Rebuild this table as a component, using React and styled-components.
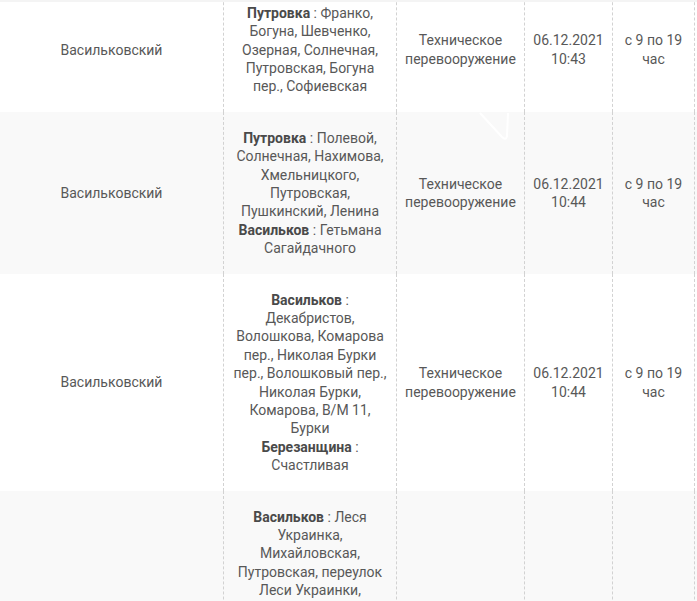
import styled, { createGlobalStyle } from "styled-components";

const GlobalStyle = createGlobalStyle`
  html, body {
    margin: 0;
    padding: 0;
    background: #fff;
  }
  body {
    font-family: Roboto, "Liberation Sans", sans-serif;
  }
`;

const Viewport = styled.div`
  width: 697px;
  height: 601px;
  overflow: hidden;
  box-sizing: border-box;
  border-top: 2px solid #f4f4f4;
`;

const Table = styled.div`
  margin-top: -14.8px;
`;

const Row = styled.div`
  position: relative;
  display: grid;
  grid-template-columns: 223px 173px 128px 88px 82px 1fr;
  background: ${(p) => (p.$shade ? "#f9f9f9" : "#fff")};
`;

const Cell = styled.div`
  display: flex;
  flex-direction: column;
  justify-content: center;
  box-sizing: border-box;
  padding: 16.5px 8px;
  text-align: center;
  font-size: 14px;
  line-height: 18.4px;
  color: #585858;

  & + & {
    border-left: 1px dashed #d2d2d2;
  }
`;

const Town = styled.b`
  font-weight: 700;
  color: #4a4a4a;
`;

const Segment = styled.div``;

const Mark = styled.svg`
  position: absolute;
  left: 478px;
  top: 0;
  width: 34px;
  height: 32px;
  pointer-events: none;
`;

const rows = [
  {
    streets: [
      ["Путровка", "Франко, Богуна, Шевченко, Озерная, Солнечная, Путровская, Богуна пер., Софиевская"],
    ],
    date: "06.12.2021 10:43",
  },
  {
    streets: [
      ["Путровка", "Полевой, Солнечная, Нахимова, Хмельницкого, Путровская, Пушкинский, Ленина"],
      ["Васильков", "Гетьмана Сагайдачного"],
    ],
    date: "06.12.2021 10:44",
    mark: true,
  },
  {
    streets: [
      ["Васильков", "Декабристов, Волошкова, Комарова пер., Николая Бурки пер., Волошковый пер., Николая Бурки, Комарова, В/М 11, Бурки"],
      ["Березанщина", "Счастливая"],
    ],
    date: "06.12.2021 10:44",
  },
  {
    streets: [
      ["Васильков", "Леся Украинка, Михайловская, Путровская, переулок Леси Украинки, Шевченко, Грушевского, Соборная, Ярослава Мудрого, Декабристов, Франка, Киевская, Садовая, Новая, Шевченко пер., Гагарина, Толстого, Набережная, Первомайская, Владимирская, Зелёная, Лесная, Луговая, Южная, Северная, Западная, Восточная, Речная, Полевая, Тихая, Мира"],
    ],
    date: "06.12.2021 10:44",
  },
];

export default function App() {
  return (
    <>
      <GlobalStyle />
      <Viewport>
        <Table>
          {rows.map((row, i) => (
            <Row key={i} $shade={i % 2 === 1}>
              <Cell>Васильковский</Cell>
              <Cell>
                {row.streets.map(([town, list]) => (
                  <Segment key={town}>
                    <Town>{town}</Town> : {list}
                  </Segment>
                ))}
              </Cell>
              <Cell>Техническое перевооружение</Cell>
              <Cell>{row.date}</Cell>
              <Cell>с 9 по 19 час</Cell>
              <Cell />
              {row.mark && (
                <Mark viewBox="0 0 34 32">
                  <path
                    d="M2 1 L24 25 Q28 29 29 24 L30 1"
                    fill="none"
                    stroke="#ffffff"
                    strokeWidth="2"
                  />
                </Mark>
              )}
            </Row>
          ))}
        </Table>
      </Viewport>
    </>
  );
}
